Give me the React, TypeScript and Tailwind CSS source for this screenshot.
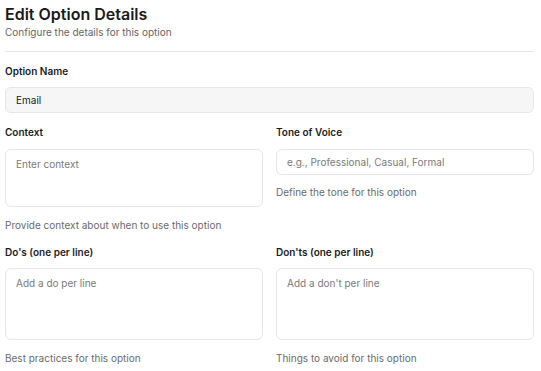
import React from "react";

function Label({ children }: { children: React.ReactNode }) {
  return <div className="text-[10px] leading-[16px] font-semibold text-[#1c1c1c]">{children}</div>;
}

function Helper({ children, className = "" }: { children: React.ReactNode; className?: string }) {
  return <div className={"text-[10px] leading-[16px] text-[#6b6b6b] " + className}>{children}</div>;
}

export default function App() {
  return (
    <div className="w-[541px] h-[371px] bg-white pl-[5px] pr-[7px] pt-[4px] font-['Inter',sans-serif] overflow-hidden">
      <div className="text-[16px] leading-[20px] font-semibold text-[#1a1a1a]">Edit Option Details</div>
      <div className="text-[10px] leading-[16px] text-[#666666]">Configure the details for this option</div>
      <div className="mt-[11px] h-px bg-[#e5e5e5]" />
      <div className="mt-[11px]">
        <Label>Option Name</Label>
        <div className="mt-[8px] h-[26px] rounded-[6px] border border-[#e6e6e6] bg-[#f6f6f6] px-[10px] flex items-center text-[10px] text-[#1a1a1a]">
          Email
        </div>
      </div>
      <div className="mt-[11px] grid grid-cols-2 gap-x-[13px] items-start">
        <div>
          <Label>Context</Label>
          <div className="mt-[9px] h-[58px] rounded-[6px] border border-[#e6e6e6] bg-white px-[10px] pt-[6px] text-[10px] leading-[16px] text-[#7a7a7a]">
            Enter context
          </div>
          <Helper className="mt-[10px]">Provide context about when to use this option</Helper>
        </div>
        <div>
          <Label>Tone of Voice</Label>
          <div className="mt-[9px] h-[26px] rounded-[6px] border border-[#e6e6e6] bg-white px-[10px] flex items-center text-[10px] text-[#7a7a7a]">
            e.g., Professional, Casual, Formal
          </div>
          <Helper className="mt-[9px]">Define the tone for this option</Helper>
        </div>
      </div>
      <div className="mt-[11px] grid grid-cols-2 gap-x-[13px] items-start">
        <div>
          <Label>Do's (one per line)</Label>
          <div className="mt-[8px] h-[72px] rounded-[6px] border border-[#e6e6e6] bg-white px-[10px] pt-[6px] text-[10px] leading-[16px] text-[#7a7a7a]">
            Add a do per line
          </div>
          <Helper className="mt-[10px]">Best practices for this option</Helper>
        </div>
        <div>
          <Label>Don'ts (one per line)</Label>
          <div className="mt-[8px] h-[72px] rounded-[6px] border border-[#e6e6e6] bg-white px-[10px] pt-[6px] text-[10px] leading-[16px] text-[#7a7a7a]">
            Add a don't per line
          </div>
          <Helper className="mt-[10px]">Things to avoid for this option</Helper>
        </div>
      </div>
    </div>
  );
}
